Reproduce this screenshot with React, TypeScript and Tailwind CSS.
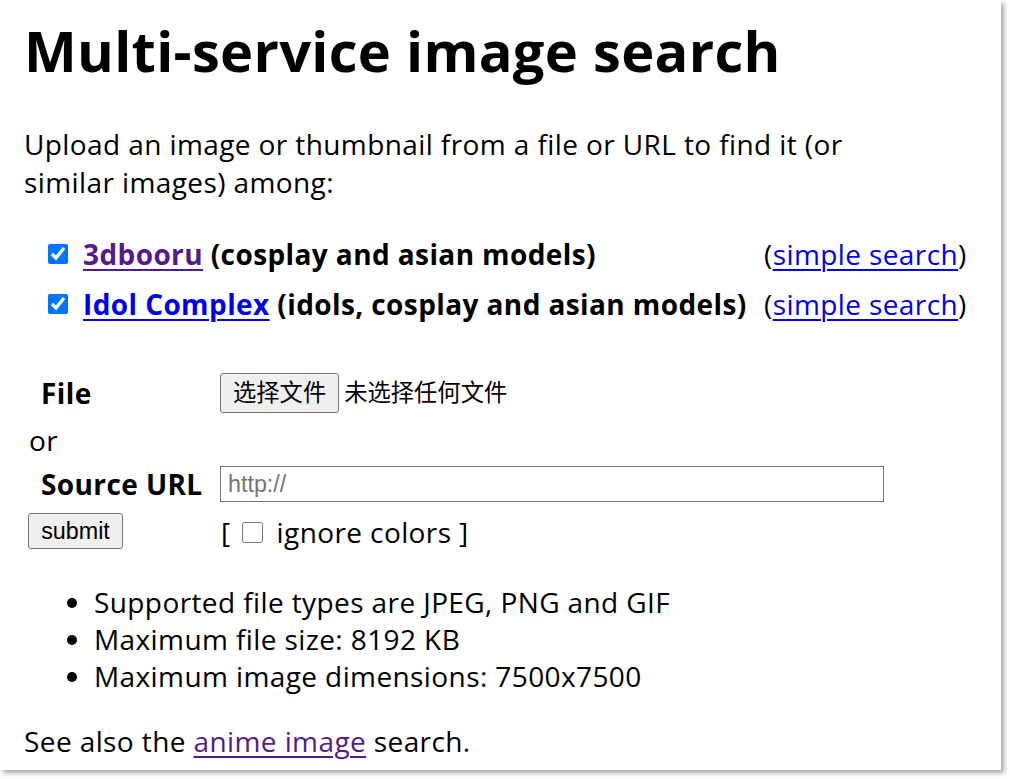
const linkVisited = "text-[#551a8b] underline underline-offset-[4px] decoration-[2px]";
const linkBlue = "text-[#0000ee] underline underline-offset-[4px] decoration-[2px]";

function ServiceRow({ name, desc, visited }: { name: string; desc: string; visited?: boolean }) {
  return (
    <>
      <div className="flex h-[50px] items-center">
        <input type="checkbox" defaultChecked className="h-5 w-5 accent-[#0075ff]" />
        <span className="ml-[15px] font-bold">
          <a href="#" className={visited ? linkVisited : linkBlue}>
            {name}
          </a>{" "}
          {desc}
        </span>
      </div>
      <div className="flex h-[50px] items-center">
        (<a href="#" className={linkBlue}>simple search</a>)
      </div>
    </>
  );
}

export default function App() {
  return (
    <div className="h-[779px] w-[1010px] overflow-hidden bg-white">
      <div className="h-[770px] w-[1001px] bg-white pl-6 pt-[13px] text-[28px] leading-[38px] tracking-[0.4px] text-black shadow-[3px_3px_5px_rgba(0,0,0,0.35)] [font-family:'Open_Sans',sans-serif]">
        <h1 className="text-[56px] font-bold leading-[74px] tracking-[0.3px]">Multi-service image search</h1>

        <p className="mt-[38px] max-w-[860px]">
          Upload an image or thumbnail from a file or URL to find it (or similar images) among:
        </p>

        <div className="ml-[24px] mt-[28px] grid grid-cols-[716px_auto]">
          <ServiceRow name="3dbooru" desc="(cosplay and asian models)" visited />
          <ServiceRow name="Idol Complex" desc="(idols, cosplay and asian models)" />
        </div>

        <form className="mt-[41px] flex flex-col">
          <div className="flex h-[46px] items-center">
            <div className="w-[196px] pl-[17px] font-bold">File</div>
            <label className="flex items-center [font-family:'Liberation_Sans','Noto_Sans_CJK_SC',sans-serif] text-[23.3px] tracking-normal">
              <span className="flex h-[40px] items-center rounded-[3px] border border-[#767676] bg-[#efefef] px-[12px]">
                选择文件
              </span>
              <span className="ml-[5px]">未选择任何文件</span>
            </label>
          </div>
          <div className="flex h-[48px] items-center pl-[5px]">or</div>
          <div className="flex h-[40px] items-center">
            <div className="w-[196px] pl-[17px] font-bold">Source URL</div>
            <input
              type="text"
              placeholder="http://"
              className="h-[36px] w-[664px] border border-[#767676] px-[7px] text-[23.3px] tracking-normal placeholder:text-[#757575] [font-family:'Liberation_Sans',sans-serif]"
            />
          </div>
          <div className="mt-[6px] flex h-[41px] items-center">
            <div className="w-[196px] pl-[4px]">
              <button
                type="button"
                className="flex h-[36px] w-[95px] items-center justify-center rounded-[3px] border border-[#767676] bg-[#efefef] text-[23.3px] tracking-normal [font-family:'Liberation_Sans',sans-serif]"
              >
                submit
              </button>
            </div>
            <div className="flex items-center pl-[1px] pt-[3px]">
              <span>[</span>
              <input type="checkbox" className="ml-[11px] h-[21px] w-[21px]" />
              <span className="ml-[14px]">ignore colors ]</span>
            </div>
          </div>
        </form>

        <ul className="mt-[33px] list-disc pl-[70px] leading-[37px]">
          <li>Supported file types are JPEG, PNG and GIF</li>
          <li>Maximum file size: 8192 KB</li>
          <li>Maximum image dimensions: 7500x7500</li>
        </ul>

        <p className="mt-[27px]">
          See also the <a href="#" className={linkVisited}>anime image</a> search.
        </p>
      </div>
    </div>
  );
}
